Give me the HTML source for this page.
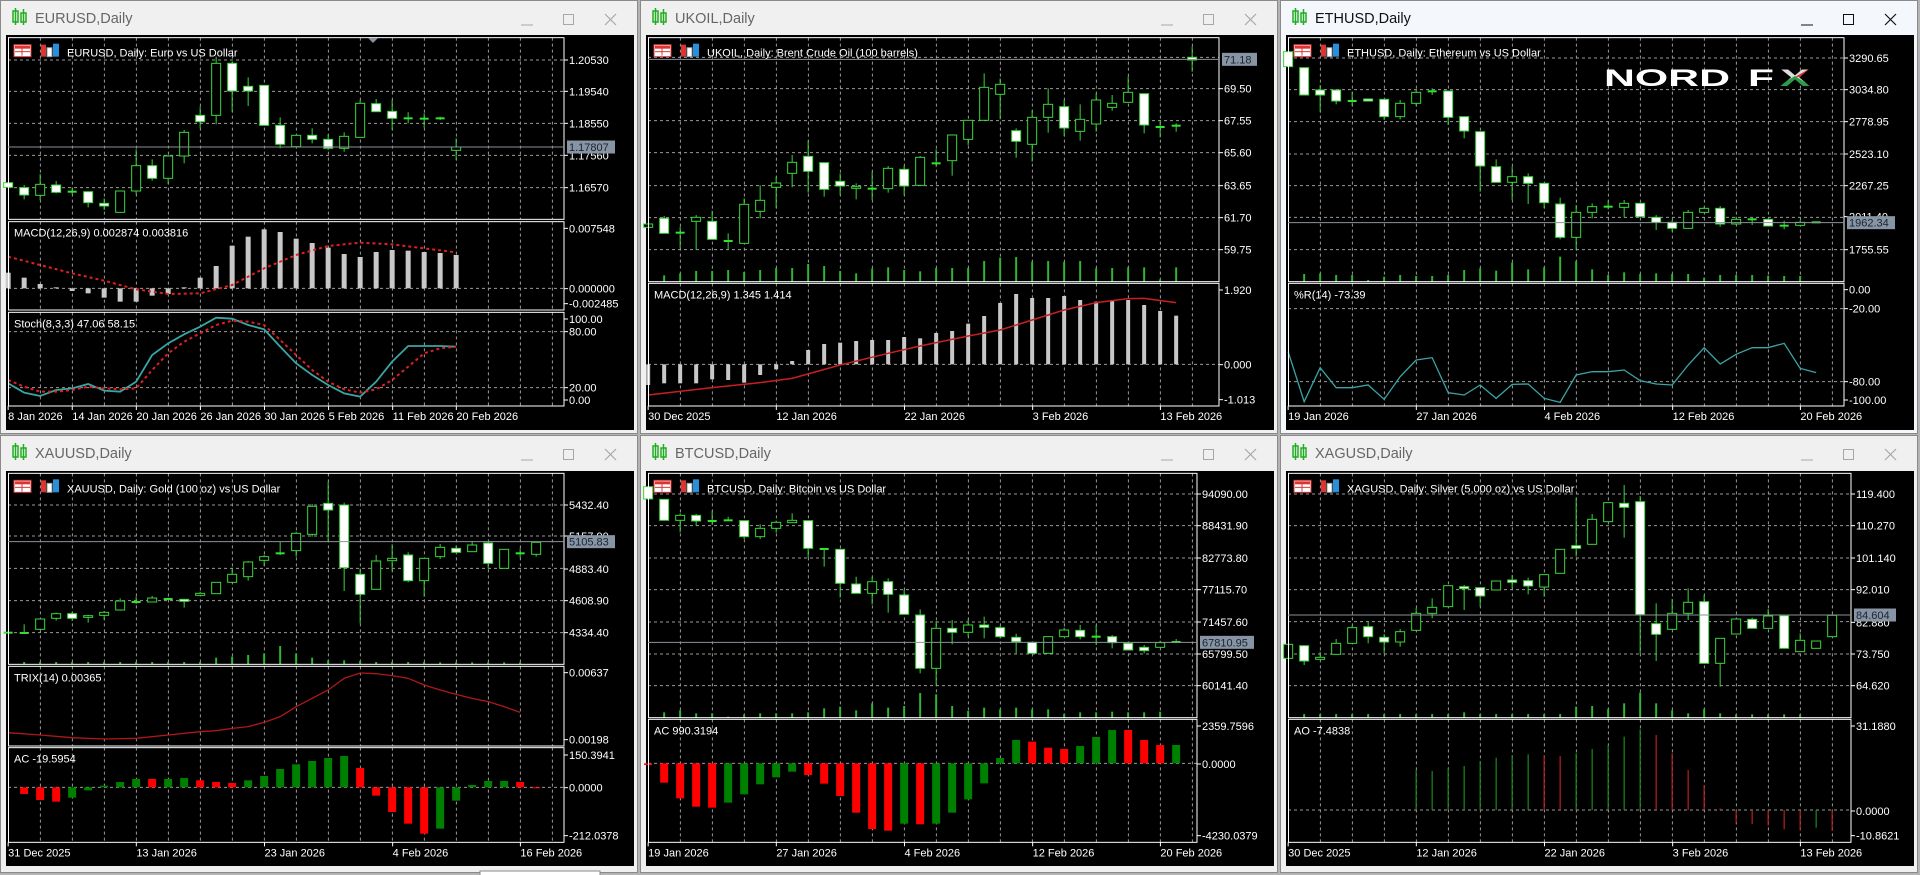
<!DOCTYPE html>
<html><head><meta charset="utf-8">
<style>
html,body{margin:0;padding:0;background:#b4b4b4;width:1920px;height:875px;overflow:hidden}
svg{display:block}
text{font-family:"Liberation Sans",Arial,sans-serif}
</style></head>
<body>
<svg id="s" width="1920" height="875" xmlns="http://www.w3.org/2000/svg"></svg>
<script>
const X=k=>8.16+16*k, Y=z=>z/3, ZX=z=>z/2.45;
let out=[];
function grid(right,top,bot,hy){let s='';for(let x=40.4;x<right-2;x+=32)s+=`<line x1="${x}" y1="${top}" x2="${x}" y2="${bot}" stroke="#9a9a9a" stroke-dasharray="3,3"/>`;
 (hy||[]).forEach(z=>{s+=`<line x1="8" y1="${Y(z)}" x2="${right}" y2="${Y(z)}" stroke="#9a9a9a" stroke-dasharray="3,3"/>`});return s;}
function labels(right,ls){let s='';ls.forEach(([t,z])=>{s+=`<line x1="${right}" y1="${Y(z)}" x2="${right+4}" y2="${Y(z)}" stroke="#fff"/><text x="${right+5}" y="${Y(z)+4}" fill="#fff" font-size="11">${t}</text>`});return s;}
function candles(str){let s='';str.split(';').forEach(r=>{r=r.trim();if(!r)return;let [k,t,b,h,l,ty]=r.split(',');k=+k;t=+t;b=+b;h=+h||t;l=+l||b;const cx=X(k);
 s+=`<line x1="${cx}" y1="${Y(h)}" x2="${cx}" y2="${Y(l)}" stroke="#3ad53a" stroke-width="1"/>`;
 if(ty=='d')s+=`<line x1="${cx-4.5}" y1="${Y(t)}" x2="${cx+4.5}" y2="${Y(t)}" stroke="#33e033" stroke-width="2"/>`;
 else s+=`<rect x="${cx-4.5}" y="${Y(t)}" width="9" height="${Math.max(1,Y(b)-Y(t))}" fill="${ty=='w'?'#fff':'#000'}" stroke="#3ad53a" stroke-width="1"/>`;});return s;}
function vols(bot,arr,st){let s='';arr.forEach((z,i)=>{if(z==null)return;s+=`<line x1="${X(i+st)}" y1="${Y(bot)}" x2="${X(i+st)}" y2="${Y(z)}" stroke="#2fb52f" stroke-width="2"/>`});return s;}
function hist(zero,arr,col,w){let s='';arr.forEach(([k,z,c])=>{const a=Math.min(Y(z),Y(zero)),b=Math.max(Y(z),Y(zero));s+=`<rect x="${X(k)-w/2}" y="${a}" width="${w}" height="${Math.max(1,b-a)}" fill="${c||col}"/>`});return s;}
function line(arr,col,dash,w){return `<polyline fill="none" stroke="${col}" stroke-width="${w||1.3}" ${dash?'stroke-dasharray="'+dash+'"':''} points="${arr.map((z,i)=>z==null?'':X(i)+','+Y(z)).filter(x=>x).join(' ')}"/>`}
function lineK(arr,col,dash,w){return `<polyline fill="none" stroke="${col}" stroke-width="${w||1.3}" ${dash?'stroke-dasharray="'+dash+'"':''} points="${arr.map(([k,z])=>X(k)+','+Y(z)).join(' ')}"/>`}
function win(ox,oy,c){
 const H=c.h, R=c.right, act=c.active;
 let s=`<g transform="translate(${ox},${oy})">`;
 s+=`<rect x="0.5" y="0.5" width="637" height="${H}" fill="${act?'#f4f8fd':'#f0f0f0'}" stroke="#8a8a8a"/>`;
 s+=`<rect x="13" y="11" width="5" height="11" fill="none" stroke="#1fae1f" stroke-width="1.5"/><line x1="15.5" y1="8" x2="15.5" y2="25" stroke="#1fae1f" stroke-width="1.5"/><rect x="21" y="13" width="5" height="9" fill="none" stroke="#1fae1f" stroke-width="1.5"/><line x1="23.5" y1="9" x2="23.5" y2="25" stroke="#1fae1f" stroke-width="1.5"/>`;
 s+=`<text x="35" y="23" font-size="14.5" fill="${act?'#111':'#666'}">${c.title}</text>`;
 const cc=act?'#111':'#a8a8a8';
 s+=`<line x1="521" y1="25" x2="533" y2="25" stroke="${cc}"/><rect x="563.5" y="14.5" width="10" height="10" fill="none" stroke="${cc}"/><path d="M605 14 L616 25 M616 14 L605 25" stroke="${cc}" stroke-width="1.2"/>`;
 const T=c.bt;
 s+=`<rect x="6" y="${T}" width="628" height="${c.bb-T}" fill="#000"/>`;
 c.panes.forEach((p,i)=>{
  s+=grid(R,Y(p.t),Y(p.b),p.hg);
  s+=p.draw||'';
  s+=`<rect x="8.5" y="${Y(p.t)}" width="${R-8.5}" height="${Y(p.b)-Y(p.t)}" fill="none" stroke="#fff"/>`;
  s+=labels(R,p.l||[]);
  if(p.name)s+=`<text x="14" y="${Y(p.t)+15}" fill="#fff" font-size="11">${p.name}</text>`;
 });
 const m=c.panes[0];
 s+=`<g transform="translate(0,${Y(m.t)})"><rect x="14" y="7" width="17" height="12" fill="#fff" stroke="#d33"/><rect x="15" y="8" width="15" height="3" fill="#d33"/><line x1="15" y1="14" x2="30" y2="14" stroke="#d33"/><line x1="22" y1="8" x2="22" y2="18" stroke="#d33"/>
 <rect x="41" y="7" width="5" height="12" fill="#d33"/><rect x="47" y="10" width="5" height="9" fill="#fff" stroke="#999"/><rect x="53" y="6" width="6" height="13" fill="#2a8fd8"/>
 <text x="67" y="19" fill="#fff" font-size="11">${c.legend}</text></g>`;
 if(c.price){const [t,z]=c.price;s+=`<line x1="8" y1="${Y(z)}" x2="${R}" y2="${Y(z)}" stroke="#8a929c"/><rect x="${R+3}" y="${Y(z)-6.5}" width="${c.pw||48}" height="13" fill="#8794a3"/><text x="${R+5}" y="${Y(z)+4}" fill="#1b2230" font-size="11">${t}</text>`;}
 const by=Y(c.panes[c.panes.length-1].b);
 c.dates.forEach(([t,z])=>{const x=ZX(z);s+=`<line x1="${x}" y1="${by}" x2="${x}" y2="${by+4}" stroke="#fff"/><text x="${x}" y="${by+14}" fill="#fff" font-size="11">${t}</text>`});
 s+=c.extra||'';
 s+='</g>';out.push(s);
}
const D1=[["8 Jan 2026",20],["14 Jan 2026",177],["20 Jan 2026",334],["26 Jan 2026",491],["30 Jan 2026",648],["5 Feb 2026",805],["11 Feb 2026",962],["20 Feb 2026",1118]];

win(0,0,{h:433,right:564,title:"EURUSD,Daily",legend:"EURUSD, Daily:  Euro vs US Dollar",bt:35,bb:430,price:["1.17807",441],dates:D1,
 extra:`<path d="M368 38 L378 38 L373 43 Z" fill="#8a929c"/>`,
 panes:[
 {t:113,b:658,hg:[180,274,370,466,563],l:[["1.20530",180],["1.19540",274],["1.18550",370],["1.17560",466],["1.16570",563]],
  draw:candles("0,548,562,548,562,w;1,563,585,555,598,w;2,553,586,522,600,b;3,555,577,543,580,w;4,575,575,562,582,d;5,575,608,575,622,w;6,610,618,595,630,w;7,573,637,573,637,b;8,497,573,448,583,b;9,497,535,478,542,w;10,468,535,465,552,b;11,397,468,390,490,b;12,346,365,320,385,w;13,190,346,170,373,b;14,190,273,185,335,w;15,259,273,232,318,w;16,256,376,256,376,w;17,376,433,352,445,w;18,406,440,406,440,b;19,406,418,385,430,w;20,418,445,402,450,w;21,409,445,397,455,b;22,310,412,300,412,b;23,311,335,297,335,w;24,334,355,300,390,w;25,355,355,337,370,d;26,356,356,340,383,d;27,355,355,350,360,d;28,441,451,415,480,b")},
 {t:665,b:930,hg:[865],l:[["0.007548",685],["0.000000",866],["-0.002485",911]],name:"MACD(12,26,9) 0.002874 0.003816",
  draw:hist(865,[818,833,852,862,873,880,893,905,905,887,882,862,833,798,737,710,688,696,716,729,743,762,771,756,750,752,756,759,765].map((z,i)=>[i,z]),"#c8c8c8",5)+lineK([[0,770],[2,795],[4,820],[6,842],[8,868],[10,882],[12,880],[14,855],[16,805],[18,765],[20,738],[22,728],[24,733],[26,745],[28,757]],"#e02020","3,3",2)},
 {t:937,b:1218,hg:[995,1163],l:[["100.00",957],["80.00",995],["20.00",1163],["0.00",1200]],name:"Stoch(8,3,3) 47.06 58.15",
  draw:line([1150,1178,1188,1170,1165,1152,1172,1175,1145,1065,1030,1003,980,953,956,975,988,1040,1090,1125,1155,1180,1190,1145,1085,1038,1038,1038,1040],"#3aa5a5",null,1.8)+line([1140,1160,1175,1175,1170,1160,1165,1168,1165,1110,1060,1025,1000,975,962,965,975,1020,1065,1110,1145,1168,1178,1168,1140,1100,1060,1045,1040],"#e02020","3,3",2)}
 ]});

win(640,0,{h:433,right:579,title:"UKOIL,Daily",legend:"UKOIL, Daily:  Brent Crude Oil (100 barrels)",bt:35,bb:430,price:["71.18",178],pw:35,
 dates:[["30 Dec 2025",20],["12 Jan 2026",334],["22 Jan 2026",648],["3 Feb 2026",962],["13 Feb 2026",1275]],
 panes:[
 {t:113,b:845,hg:[172,266,362,458,557,653,749],l:[["69.50",266],["67.55",362],["65.60",458],["63.65",557],["61.70",653],["59.75",749]],
  draw:vols(845,[null,826,820,813,813,810,816,810,804,804,792,798,813,820,806,802,810,814,804,804,804,783,773,771,785,783,786,783,805,804,802,802,838,802],0)+
  candles("0,672,682,672,682,b;1,655,700,648,700,w;2,698,698,680,745,d;3,652,664,645,750,b;4,664,718,632,718,w;5,723,723,700,748,d;6,613,730,595,730,b;7,601,634,556,655,b;8,549,562,530,625,b;9,487,520,465,562,b;10,469,514,422,578,w;11,488,568,488,590,w;12,544,558,520,585,w;13,560,565,550,598,b;14,566,566,515,600,d;15,505,566,498,578,b;16,508,558,497,585,w;17,472,556,468,556,b;18,490,490,448,500,d;19,405,482,403,527,b;20,361,418,360,435,b;21,262,361,220,361,b;22,253,283,235,358,b;23,392,424,385,473,w;24,352,433,330,485,b;25,313,352,265,398,b;26,320,384,300,408,w;27,358,394,313,422,b;28,300,372,280,395,b;29,310,322,285,332,b;30,277,307,230,307,b;31,281,375,281,400,w;32,381,381,360,412,d;33,377,377,370,395,d;34,172,180,140,215,w")},
 {t:850,b:1218,hg:[1093],l:[["1.920",870],["0.000",1094],["-1.013",1199]],name:"MACD(12,26,9) 1.345 1.414",
  draw:hist(1093,[1155,1150,1150,1150,1138,1140,1148,1125,1108,1083,1050,1032,1028,1023,1020,1020,1011,1015,999,993,971,948,909,882,894,894,888,900,905,900,900,915,933,947].map((z,i)=>[i,z]),"#c8c8c8",4)+
  lineK([[0,1185],[4,1163],[7,1148],[9,1135],[12,1095],[15,1060],[17,1038],[20,1008],[22,990],[24,960],[26,930],[28,908],[30,896],[31,895],[33,908]],"#c82020",null,1.5)}
 ]});

win(1280,0,{h:433,right:564,active:true,title:"ETHUSD,Daily",legend:"ETHUSD, Daily:  Ethereum vs US Dollar",bt:35,bb:430,price:["1962.34",668],
 dates:[["19 Jan 2026",20],["27 Jan 2026",334],["4 Feb 2026",648],["12 Feb 2026",962],["20 Feb 2026",1275]],
 extra:`<svg x="324" y="66" width="210" height="22" viewBox="0 0 210 22"><defs><clipPath id="xc"><text x="176" y="20" font-size="24" font-weight="bold" textLength="30" lengthAdjust="spacingAndGlyphs">X</text></clipPath></defs><text x="0" y="20" font-size="24" font-weight="bold" fill="#fff" textLength="126" lengthAdjust="spacingAndGlyphs">NORD</text><text x="144" y="20" font-size="24" font-weight="bold" fill="#fff" textLength="26" lengthAdjust="spacingAndGlyphs">F</text><g clip-path="url(#xc)"><rect x="170" y="0" width="40" height="22" fill="#ddd"/><path d="M191 11 L210 0 L210 11 Z" fill="#e03030"/><path d="M170 22 L191 10 L210 22 Z" fill="#2a9d48"/></g></svg>`,
 panes:[
 {t:113,b:845,hg:[174,269,365,462,557,652,749],l:[["3290.65",174],["3034.80",269],["2778.95",365],["2523.10",462],["2267.25",557],["2011.40",650],["1755.55",749]],
  draw:vols(845,[null,822,820,825,825,840,830,825,828,828,825,810,805,812,788,808,802,770,783,808,825,817,822,820,822,822,833,825,825,825,827,828,828],0)+
  candles("0,155,200,155,200,w;1,203,285,203,285,w;2,270,285,255,335,w;3,270,303,270,313,w;4,303,303,275,318,d;5,297,303,297,303,w;6,298,350,298,360,w;7,310,350,300,358,b;8,277,310,270,318,b;9,274,274,265,285,d;10,273,352,273,375,w;11,350,393,350,415,w;12,395,498,395,575,w;13,500,547,478,547,w;14,530,547,500,600,b;15,530,550,520,612,w;16,550,608,550,625,w;17,612,712,593,718,w;18,637,712,615,750,b;19,620,637,610,655,b;20,620,620,602,628,d;21,610,622,600,652,b;22,610,650,610,650,w;23,652,667,645,690,w;24,667,685,660,695,w;25,637,685,630,685,b;26,625,637,620,637,b;27,625,672,618,680,w;28,658,672,650,675,b;29,658,658,652,675,d;30,658,678,655,678,w;31,677,677,662,688,d;32,667,676,662,676,b;33,667,667,667,667,d")},
 {t:850,b:1218,hg:[926,1145],l:[["0.00",869],["-20.00",926],["-80.00",1145],["-100.00",1200]],name:"%R(14) -73.39",
  draw:line([1055,1205,1103,1163,1163,1155,1198,1130,1080,1073,1178,1185,1155,1195,1153,1152,1195,1207,1125,1115,1115,1110,1142,1152,1155,1095,1043,1092,1063,1043,1043,1030,1105,1118],"#3aa5a5",null,1.3)}
 ]});

win(0,435,{h:437,right:564,title:"XAUUSD,Daily",legend:"XAUUSD, Daily:  Gold (100 oz) vs US Dollar",bt:36,bb:431,price:["5105.83",320],
 dates:[["31 Dec 2025",20],["13 Jan 2026",334],["23 Jan 2026",648],["4 Feb 2026",962],["16 Feb 2026",1275]],
 panes:[
 {t:115,b:688,hg:[210,303,400,497,593],l:[["5432.40",210],["5157.90",303],["4883.40",402],["4608.90",497],["4334.40",593]],
  draw:vols(688,[null,681,681,681,681,681,681,681,681,681,681,681,681,668,665,660,655,633,655,668,676,676,678,681,681,681,681,682,682,682,682,682,682],0)+
  candles("0,593,593,593,593,d;1,594,594,568,594,d;2,552,583,552,583,b;3,536,550,533,557,b;4,536,550,530,558,w;5,542,547,540,563,b;6,532,541,528,555,b;7,498,525,490,527,b;8,501,501,485,507,d;9,489,501,483,501,b;10,492,492,488,492,d;11,493,499,493,518,w;12,475,481,470,481,b;13,442,476,442,476,b;14,418,442,398,442,b;15,381,425,378,437,b;16,365,376,360,393,b;17,355,355,320,360,d;18,295,347,290,365,b;19,214,298,207,305,b;20,205,225,140,320,w;21,210,398,203,468,w;22,418,478,400,565,w;23,378,463,360,463,b;24,370,377,328,410,b;25,360,437,352,442,w;26,370,437,370,485,b;27,337,365,327,372,b;28,340,352,332,355,w;29,330,350,318,350,b;30,324,385,322,400,w;31,343,400,343,400,b;32,355,355,340,368,d;33,322,358,322,365,b")},
 {t:694,b:933,l:[["0.00637",713],["0.00198",914]],name:"TRIX(14) 0.00365",
  draw:lineK([[0,893],[2,900],[4,908],[6,912],[8,910],[10,900],[12,890],[13,887],[14,880],[15,875],[16,862],[17,845],[18,815],[19,790],[20,765],[21,730],[22,714],[23,716],[24,722],[25,730],[26,750],[27,765],[28,778],[29,790],[30,800],[31,815],[32,832]],"#b01818",null,1.3)},
 {t:938,b:1222,hg:[1057],l:[["150.3941",960],["0.0000",1058],["-212.0378",1202]],name:"AC -19.5954",
  draw:hist(1057,(()=>{const G='#008000',Rd='#ff0000';const a=[[1077,Rd],[1095,Rd],[1100,Rd],[1088,G],[1066,G],[1052,G],[1041,G],[1032,G],[1032,Rd],[1032,G],[1029,G],[1036,Rd],[1041,Rd],[1044,Rd],[1036,G],[1023,G],[1002,G],[988,G],[978,G],[969,G],[963,G],[999,Rd],[1082,Rd],[1131,Rd],[1166,Rd],[1196,Rd],[1181,G],[1097,G],[1050,G],[1038,G],[1038,G],[1041,Rd],[1059,Rd]];return a.map((v,i)=>[i+1,v[0],v[1]])})(),"#0a0",8)}
 ]});

win(640,435,{h:437,right:557,title:"BTCUSD,Daily",legend:"BTCUSD, Daily:  Bitcoin vs US Dollar",bt:36,bb:431,price:["67810.95",622],pw:54,
 dates:[["19 Jan 2026",20],["27 Jan 2026",334],["4 Feb 2026",648],["12 Feb 2026",962],["20 Feb 2026",1275]],
 panes:[
 {t:115,b:848,hg:[177,272,369,464,561,657,752],l:[["94090.00",177],["88431.90",272],["82773.80",369],["77115.70",464],["71457.60",561],["65799.50",657],["60141.40",752]],
  draw:vols(848,[null,832,826,835,835,845,838,835,835,835,832,820,815,826,805,818,813,774,778,813,828,818,823,818,823,823,836,832,832,830,832,832,830],0)+
  candles("0,155,192,155,192,w;1,193,256,193,256,w;2,241,256,235,292,b;3,241,258,237,272,w;4,258,258,228,270,d;5,256,256,245,256,d;6,257,305,257,312,w;7,280,305,268,312,b;8,262,280,257,293,b;9,256,263,235,263,b;10,257,340,257,368,w;11,342,342,342,395,d;12,343,445,343,488,w;13,447,475,425,475,w;14,440,475,425,508,b;15,440,478,430,533,w;16,480,538,465,538,w;17,540,700,523,715,w;18,580,700,558,752,b;19,580,592,555,628,w;20,570,592,553,605,b;21,570,577,545,610,w;22,578,605,573,610,w;23,607,620,596,655,w;24,622,655,622,655,w;25,605,655,605,655,b;26,585,605,578,605,b;27,586,605,570,613,w;28,605,605,570,630,d;29,605,623,600,640,w;30,625,645,625,645,w;31,637,647,630,655,w;32,623,637,617,637,b;33,621,621,612,621,d")},
 {t:853,b:1222,hg:[985],l:[["2359.7596",873],["0.0000",987],["-4230.0379",1202]],name:"AC 990.3194",
  draw:hist(985,(()=>{const G='#008000',Rd='#ff0000';const a=[[990,Rd],[1043,Rd],[1090,Rd],[1115,Rd],[1118,Rd],[1103,G],[1078,G],[1048,G],[1027,G],[1010,G],[1020,Rd],[1046,Rd],[1083,Rd],[1133,Rd],[1182,Rd],[1187,Rd],[1166,G],[1168,Rd],[1166,G],[1133,G],[1093,G],[1045,G],[969,G],[915,G],[920,Rd],[938,Rd],[942,Rd],[933,G],[906,G],[885,G],[885,Rd],[915,Rd],[930,Rd],[930,G]];return a.map((v,i)=>[i,v[0],v[1]])})(),"#0a0",8)}
 ]});

win(1280,435,{h:437,right:571,title:"XAGUSD,Daily",legend:"XAGUSD, Daily:  Silver (5,000 oz) vs US Dollar",bt:36,bb:431,price:["84.604",540],pw:42,
 dates:[["30 Dec 2025",20],["12 Jan 2026",334],["22 Jan 2026",648],["3 Feb 2026",962],["13 Feb 2026",1275]],
 panes:[
 {t:115,b:848,hg:[177,272,369,464,560,657,752],l:[["119.400",177],["110.270",272],["101.140",369],["92.010",464],["82.880",562],["73.750",657],["64.620",752]],
  draw:vols(848,[null,837,837,837,837,837,837,837,837,837,837,832,837,837,837,837,837,837,815,813,822,805,773,805,826,835,822,835,838,838,838,838,838],0)+
  candles("0,628,670,628,670,b;1,632,678,632,690,w;2,667,673,650,673,b;3,625,658,612,658,b;4,578,625,572,625,b;5,575,605,560,625,w;6,607,621,597,655,w;7,590,621,582,635,b;8,535,586,520,586,b;9,517,535,490,550,b;10,452,515,452,515,b;11,455,461,450,525,w;12,458,483,458,515,w;13,438,465,438,465,b;14,435,442,420,460,w;15,437,453,428,478,w;16,419,456,419,485,b;17,343,415,343,415,b;18,332,340,188,365,w;19,253,328,237,328,b;20,203,260,203,260,b;21,205,217,150,308,w;22,200,539,183,655,w;23,566,598,505,678,w;24,535,583,492,583,b;25,502,535,460,555,b;26,500,685,480,685,w;27,610,685,610,755,b;28,552,597,552,597,b;29,553,580,548,580,w;30,543,580,522,580,b;31,542,640,542,640,w;32,616,650,595,650,b;33,618,640,618,640,b;34,541,605,541,605,b")},
 {t:853,b:1222,hg:[1125],l:[["31.1880",873],["0.0000",1128],["-10.8621",1202]],name:"AO -7.4838",
  draw:hist(1125,(()=>{const G='#1d8a1d',Rd='#b82020';const a=[[8,1005,G],[9,1008,G],[10,1000,G],[11,993,G],[12,978,G],[13,968,G],[14,960,G],[15,958,G],[16,960,Rd],[17,963,Rd],[18,955,G],[19,942,G],[20,930,G],[21,905,G],[22,883,G],[23,900,Rd],[24,955,Rd],[25,1005,Rd],[26,1050,Rd],[27,1120,Rd],[28,1165,Rd],[29,1167,Rd],[30,1172,Rd],[31,1183,Rd],[32,1187,Rd],[33,1178,G],[34,1188,Rd]];return a})(),"#0a0",1.2)}
 ]});

out.push(`<rect x="480" y="871" width="120" height="5" fill="#fff" stroke="#888"/>`);
document.getElementById('s').innerHTML=out.join('');
</script>
</body></html>
